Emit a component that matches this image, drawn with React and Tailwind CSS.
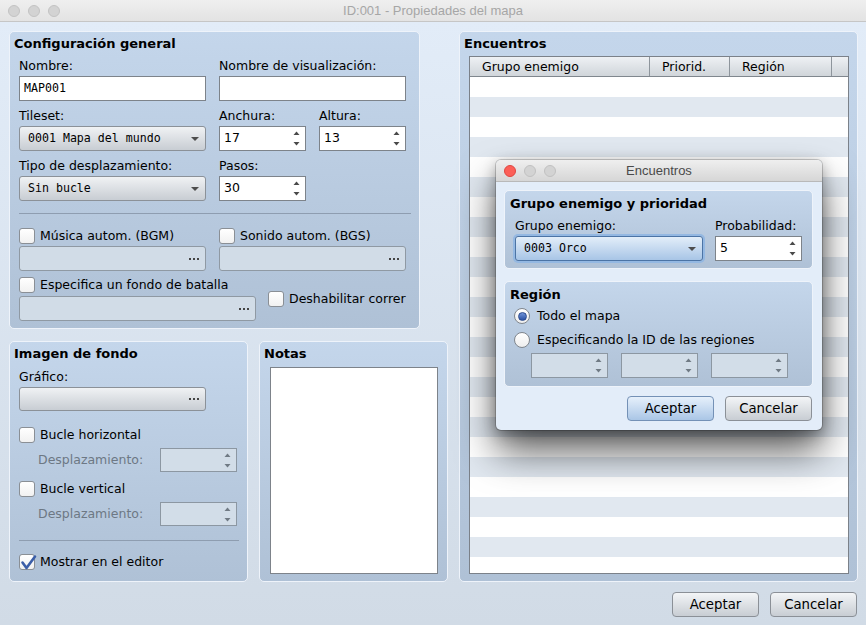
import React from 'react';

const SANS = "font-['DejaVu_Sans',sans-serif]";
const MONO = "font-['DejaVu_Sans_Mono',monospace]";
const TITLEF = "font-['Liberation_Sans',sans-serif]";

function SpinArrows({ disabled }) {
  return (
    <svg width="7" height="15" viewBox="0 0 7 15" className={disabled ? 'text-[#707a84]' : 'text-[#4a4a4a]'}>
      <path d="M0.5 4 L3.5 0.5 L6.5 4 Z" fill="currentColor" />
      <path d="M0.5 11 L6.5 11 L3.5 14.5 Z" fill="currentColor" />
    </svg>
  );
}

function Dots() {
  return (
    <svg width="10" height="2" viewBox="0 0 10 2">
      <rect x="0" y="0" width="2" height="2" fill="#444" />
      <rect x="4" y="0" width="2" height="2" fill="#444" />
      <rect x="8" y="0" width="2" height="2" fill="#444" />
    </svg>
  );
}

function Label({ children, className = '' }) {
  return <div className={`h-[16px] leading-[16px] whitespace-nowrap ${className}`}>{children}</div>;
}

function TextInput({ value, className = '' }) {
  return (
    <div className={`h-[25px] bg-white border border-[#7d838a] flex items-center pl-[4px] ${className}`}>
      <span className={`${MONO} text-[11.6px]`}>{value}</span>
    </div>
  );
}

function Spinner({ value, className = '', disabled = false }) {
  return (
    <div
      className={`border flex items-center justify-between pl-[4px] pr-[5px] ${
        disabled ? 'bg-[#d2dde8] border-[#8c97a2]' : 'bg-white border-[#7d838a]'
      } ${className}`}
    >
      <span>{value}</span>
      <SpinArrows disabled={disabled} />
    </div>
  );
}

function SelectBox({ value, className = '', focused = false }) {
  return (
    <div
      className={`h-[25px] rounded-[3px] border flex items-center justify-between pl-[8px] pr-[6px] ${
        focused
          ? 'border-[#4c74a5] bg-gradient-to-b from-[#e3eef9] to-[#a8c5e6] shadow-[0_0_0_2px_#94b8e2]'
          : 'border-[#8b9198] bg-gradient-to-b from-[#f0f2f4] to-[#c8cdd3]'
      } ${className}`}
    >
      <span className={`${MONO} text-[11.6px]`}>{value}</span>
      <svg width="8" height="4" viewBox="0 0 8 4">
        <path d="M0 0 L8 0 L4 4 Z" fill="#4d4d4d" />
      </svg>
    </div>
  );
}

function DotsField({ className = '', enabled = false }) {
  return (
    <div
      className={`rounded-[3px] border flex items-center justify-end pr-[6px] ${
        enabled
          ? 'border-[#8b9198] bg-gradient-to-b from-[#f0f2f4] to-[#c8cdd3]'
          : 'border-[#8f99a3] bg-[#d1dce7]'
      } ${className}`}
    >
      <Dots />
    </div>
  );
}

function Checkbox({ checked = false }) {
  return (
    <div className="relative w-[16px] h-[16px] shrink-0 rounded-[3px] border border-[#8a8f95] bg-gradient-to-b from-white to-[#f1f1f1]">
      {checked && (
        <svg className="absolute left-[0px] top-[-1px]" width="17" height="17" viewBox="0 0 17 17">
          <path d="M2.5 8.5 L6.5 14 L15 2.5" fill="none" stroke="#3b5ea8" strokeWidth="2.6" strokeLinecap="round" strokeLinejoin="round" />
        </svg>
      )}
    </div>
  );
}

function CheckRow({ children, checked = false, className = '' }) {
  return (
    <div className={`flex items-center gap-[5px] h-[16px] ${className}`}>
      <Checkbox checked={checked} />
      <span className="leading-[16px] whitespace-nowrap">{children}</span>
    </div>
  );
}

function Radio({ selected = false }) {
  return (
    <div className="w-[16px] h-[16px] shrink-0 rounded-full border border-[#80868d] bg-gradient-to-b from-white to-[#eeeeee] flex items-center justify-center">
      {selected && <div className="w-[9px] h-[9px] rounded-full bg-gradient-to-b from-[#7194d8] to-[#2d51a3] border border-[#2b4a8e]" />}
    </div>
  );
}

function Button({ children, primary = false }) {
  return (
    <div
      className={`w-[87px] h-[25px] rounded-[4px] border flex items-center justify-center text-[13.3px] ${
        primary
          ? 'border-[#7491b6] bg-gradient-to-b from-[#e6f0fb] to-[#aac6e6]'
          : 'border-[#8b9097] bg-gradient-to-b from-[#f3f5f7] to-[#c8cdd3]'
      }`}
    >
      {children}
    </div>
  );
}

function Panel({ title, className = '', children }) {
  return (
    <div className={`rounded-[5px] border border-[#eef3fa] bg-gradient-to-b from-[#c4d6eb] to-[#afc1d6] pt-[4px] pl-[4px] ${className}`}>
      <div className="font-bold text-[13px] h-[16px] leading-[16px] whitespace-nowrap">{title}</div>
      {children}
    </div>
  );
}

function Panel1() {
  return (
    <Panel title="Configuración general" className="w-[411px] h-[298px]">
      <div className="ml-[5px] mt-[6px]">
        <div className="flex gap-[13px]">
          <div className="w-[187px]">
            <Label>Nombre:</Label>
            <TextInput value="MAP001" className="mt-[2px]" />
          </div>
          <div className="w-[187px]">
            <Label>Nombre de visualización:</Label>
            <TextInput value="" className="mt-[2px]" />
          </div>
        </div>
        <div className="flex gap-[13px] mt-[7px]">
          <div className="w-[187px]">
            <Label>Tileset:</Label>
            <SelectBox value="0001 Mapa del mundo" className="mt-[2px]" />
          </div>
          <div className="w-[87px]">
            <Label>Anchura:</Label>
            <Spinner value="17" className="mt-[2px] h-[25px]" />
          </div>
          <div className="w-[87px]">
            <Label>Altura:</Label>
            <Spinner value="13" className="mt-[2px] h-[25px]" />
          </div>
        </div>
        <div className="flex gap-[13px] mt-[7px]">
          <div className="w-[187px]">
            <Label>Tipo de desplazamiento:</Label>
            <SelectBox value="Sin bucle" className="mt-[2px]" />
          </div>
          <div className="w-[87px]">
            <Label>Pasos:</Label>
            <Spinner value="30" className="mt-[2px] h-[25px]" />
          </div>
        </div>
        <div className="mt-[12px] h-px w-[392px] bg-[#8e9db0]" />
        <div className="flex gap-[13px] mt-[14px]">
          <div className="w-[187px]">
            <CheckRow>Música autom. (BGM)</CheckRow>
            <DotsField className="mt-[2px] h-[25px]" />
          </div>
          <div className="w-[187px]">
            <CheckRow>Sonido autom. (BGS)</CheckRow>
            <DotsField className="mt-[2px] h-[25px]" />
          </div>
        </div>
        <div className="flex items-center gap-[12px] mt-[6px]">
          <div className="w-[237px]">
            <CheckRow>Especifica un fondo de batalla</CheckRow>
            <DotsField className="mt-[3px] h-[25px]" />
          </div>
          <CheckRow>Deshabilitar correr</CheckRow>
        </div>
      </div>
    </Panel>
  );
}

function Panel2() {
  return (
    <Panel title="Imagen de fondo" className="w-[239px] h-[241px]">
      <div className="ml-[5px]">
        <Label className="mt-[7px]">Gráfico:</Label>
        <DotsField enabled className="mt-[2px] h-[24px] w-[187px]" />
        <CheckRow className="mt-[16px]">Bucle horizontal</CheckRow>
        <div className="flex items-center justify-between mt-[5px] w-[218px]">
          <span className="ml-[19px] text-[#6d7884]">Desplazamiento:</span>
          <Spinner value="" disabled className="w-[77px] h-[24px]" />
        </div>
        <CheckRow className="mt-[9px]">Bucle vertical</CheckRow>
        <div className="flex items-center justify-between mt-[5px] w-[218px]">
          <span className="ml-[19px] text-[#6d7884]">Desplazamiento:</span>
          <Spinner value="" disabled className="w-[77px] h-[24px]" />
        </div>
        <div className="mt-[14px] h-px w-[220px] bg-[#8e9db0]" />
        <CheckRow checked className="mt-[13px]">Mostrar en el editor</CheckRow>
      </div>
    </Panel>
  );
}

function Panel3() {
  return (
    <Panel title="Notas" className="w-[189px] h-[241px]">
      <div className="ml-[6px] mt-[5px] w-[168px] h-[207px] bg-white border border-[#7d838a]" />
    </Panel>
  );
}

function Panel4() {
  const rows = Array.from({ length: 25 }, (_, i) => i);
  return (
    <Panel title="Encuentros" className="w-[399px] h-[551px]">
      <div className="ml-[5px] mt-[4px] w-[380px] h-[518px] border border-[#7b8189] bg-white flex flex-col overflow-hidden">
        <div className="h-[20px] shrink-0 flex border-b border-[#80878e] bg-gradient-to-b from-[#eef1f4] to-[#d0d5da]">
          <div className="w-[180px] border-r border-[#8e959c] pl-[12px] leading-[19px]">Grupo enemigo</div>
          <div className="w-[80px] border-r border-[#8e959c] pl-[12px] leading-[19px]">Priorid.</div>
          <div className="w-[102px] border-r border-[#8e959c] pl-[12px] leading-[19px]">Región</div>
          <div className="flex-1" />
        </div>
        <div className="flex-1 overflow-hidden">
          {rows.map((i) => (
            <div key={i} className={`h-[20px] ${i % 2 === 0 ? 'bg-white' : 'bg-[#e1e8f0]'}`} />
          ))}
        </div>
      </div>
    </Panel>
  );
}

function Dialog() {
  return (
    <div className="absolute left-[496px] top-[160px] w-[326px] h-[270px] rounded-[5px] overflow-hidden bg-[#e3edf9] shadow-[0_0_0_1px_rgba(0,0,0,0.18),0_4px_14px_rgba(0,0,0,0.3),0_22px_38px_rgba(0,0,0,0.62)]">
      <div className="relative h-[22px] border-b border-[#b9b9b9] bg-gradient-to-b from-[#efefef] to-[#d6d6d6] flex items-center pl-[8px] gap-[8px]">
        <div className="w-[12px] h-[12px] rounded-full bg-[#fc5f57] border border-[#de4640]" />
        <div className="w-[12px] h-[12px] rounded-full bg-[#d3d3d3] border border-[#c1c1c1]" />
        <div className="w-[12px] h-[12px] rounded-full bg-[#d3d3d3] border border-[#c1c1c1]" />
        <div className={`absolute inset-0 flex items-center justify-center text-[13px] text-[#4a4a4a] ${TITLEF}`}>Encuentros</div>
      </div>
      <div className="px-[8px] pt-[8px]">
        <div className="w-[309px] h-[79px] rounded-[5px] border border-[#eef3fa] bg-gradient-to-b from-[#c4d6eb] to-[#afc1d6] pt-[5px] pl-[5px]">
          <div className="font-bold text-[13px] h-[16px] leading-[16px]">Grupo enemigo y prioridad</div>
          <div className="flex gap-[12px] ml-[5px] mt-[6px]">
            <div className="w-[188px]">
              <Label>Grupo enemigo:</Label>
              <SelectBox focused value="0003 Orco" className="mt-[2px]" />
            </div>
            <div className="w-[87px]">
              <Label>Probabilidad:</Label>
              <Spinner value="5" className="mt-[2px] h-[25px]" />
            </div>
          </div>
        </div>
        <div className="mt-[12px] w-[309px] h-[106px] rounded-[5px] border border-[#eef3fa] bg-gradient-to-b from-[#c4d6eb] to-[#afc1d6] pt-[5px] pl-[5px]">
          <div className="font-bold text-[13px] h-[16px] leading-[16px]">Región</div>
          <div className="flex items-center gap-[7px] mt-[5px] ml-[4px] h-[16px]">
            <Radio selected />
            <span className="leading-[16px]">Todo el mapa</span>
          </div>
          <div className="flex items-center gap-[7px] mt-[8px] ml-[4px] h-[16px]">
            <Radio />
            <span className="leading-[16px] whitespace-nowrap">Especificando la ID de las regiones</span>
          </div>
          <div className="flex gap-[13px] mt-[5px] ml-[21px]">
            <Spinner value="" disabled className="w-[77px] h-[25px]" />
            <Spinner value="" disabled className="w-[77px] h-[25px]" />
            <Spinner value="" disabled className="w-[77px] h-[25px]" />
          </div>
        </div>
        <div className="flex justify-end gap-[11px] mt-[9px] w-[308px]">
          <Button primary>Aceptar</Button>
          <Button>Cancelar</Button>
        </div>
      </div>
    </div>
  );
}

export default function App() {
  return (
    <div className={`relative w-[866px] h-[625px] overflow-hidden text-[12.5px] text-black ${SANS}`}>
      <div className="relative h-[22px] border-b border-[#c6c6c6] bg-gradient-to-b from-[#efefef] to-[#e3e3e3] flex items-center pl-[8px] gap-[8px]">
        <div className="w-[12px] h-[12px] rounded-full bg-[#d3d3d3] border border-[#c3c3c3]" />
        <div className="w-[12px] h-[12px] rounded-full bg-[#d3d3d3] border border-[#c3c3c3]" />
        <div className="w-[12px] h-[12px] rounded-full bg-[#d3d3d3] border border-[#c3c3c3]" />
        <div className={`absolute inset-0 flex items-center justify-center text-[13px] text-[#a6a6a6] ${TITLEF}`}>
          ID:001 - Propiedades del mapa
        </div>
      </div>
      <div className="h-[603px] bg-gradient-to-b from-[#e2ecf8] to-[#d1dbe6] pl-[9px] pt-[9px]">
        <div className="flex gap-[11px]">
          <div className="w-[439px] flex flex-col gap-[12px]">
            <Panel1 />
            <div className="flex gap-[11px]">
              <Panel2 />
              <Panel3 />
            </div>
          </div>
          <Panel4 />
        </div>
        <div className="flex justify-end gap-[11px] pr-[9px] mt-[10px]">
          <Button>Aceptar</Button>
          <Button>Cancelar</Button>
        </div>
      </div>
      <Dialog />
    </div>
  );
}
